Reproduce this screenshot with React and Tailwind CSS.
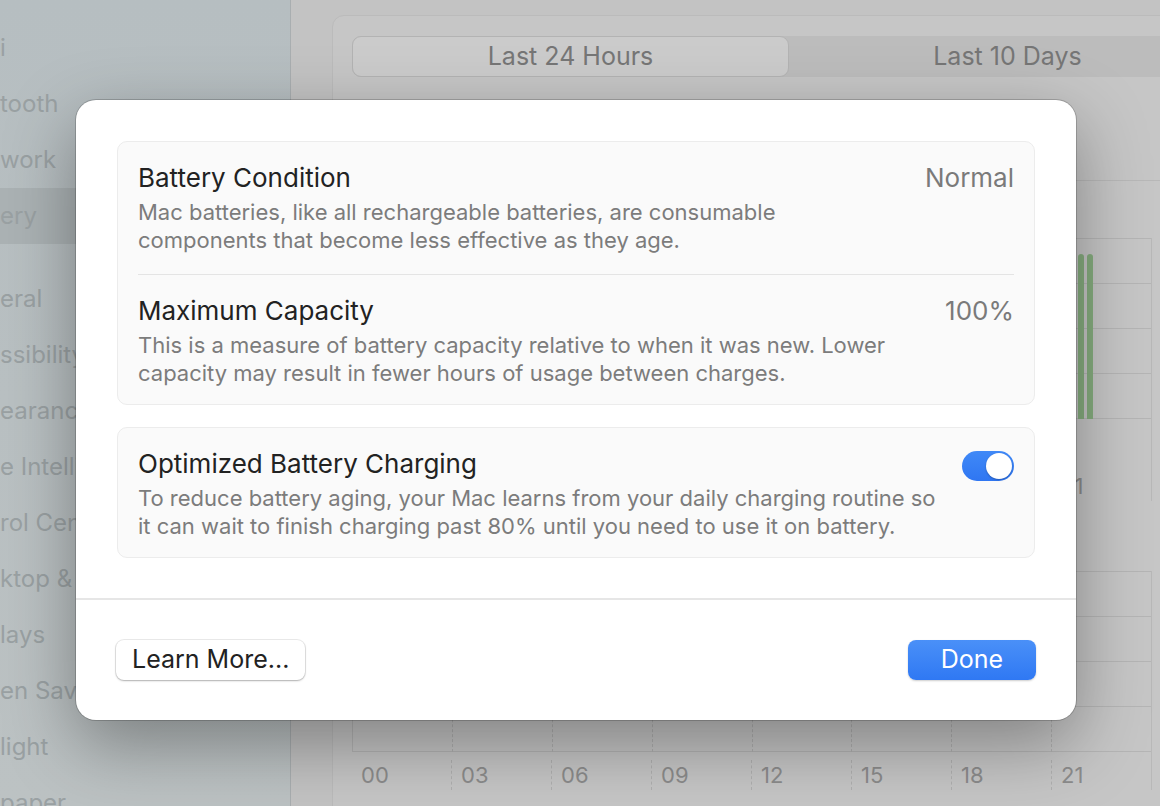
import React from "react";

const sidebarTop = ["i", "tooth", "work", "ery"];
const sidebarBottom = ["eral", "ssibility", "earance", "e Intelligence", "rol Center", "ktop & Dock", "lays", "en Saver", "light", "paper"];
const hours = ["00", "03", "06", "09", "12", "15", "18", "21"];

function SidebarItem({ label, active }) {
    return (
        <div className={`h-[56px] flex items-center whitespace-nowrap ${active ? "bg-[#abb2b4]" : ""}`}>
            <span className="text-[24px] text-[#9aa1a3]">{label}</span>
        </div>
    );
}

// labels: which hour labels are drawn (the top chart's are hidden under the sheet)
function Chart({ rows, labelGap, bars, labels }) {
    return (
        <div className="w-[800px] border-r border-[#b8b8b8]">
            <div className="relative">
                {Array.from({ length: rows }).map((_, i) => (
                    <div key={i} className="h-[45px] border-t border-[#b5b5b5]" />
                ))}
                <div className="border-t border-[#b5b5b5]" />
                <div className="absolute inset-0 flex">
                    {hours.map((h, i) => (
                        <div key={h} className={`flex-1 ${i > 0 ? "border-l border-dashed border-[#b0b0b0]" : "border-l border-[#b5b5b5]"}`} />
                    ))}
                </div>
                {bars && (
                    <div className="absolute left-[726px] top-[16px] bottom-0 flex gap-[3px]">
                        <div className="w-[6px] rounded-t-[3px] bg-[#86ad7f]" />
                        <div className="w-[6px] rounded-t-[3px] bg-[#86ad7f]" />
                    </div>
                )}
            </div>
            <div className="flex" style={{ paddingTop: labelGap }}>
                {hours.map((h, i) => (
                    <div key={h} className={`flex-1 pl-[9px] text-[22px] leading-[30px] text-[#8c8c8c] ${i > 0 ? "border-l border-dashed border-[#b0b0b0]" : ""}`}>
                        {labels.includes(h) ? h : "\u00a0"}
                    </div>
                ))}
            </div>
        </div>
    );
}

function Row({ title, value, children, toggle }) {
    return (
        <div className="flex items-start justify-between gap-6">
            <div>
                <div className="text-[26px] leading-[32px] text-[#222222]">{title}</div>
                <div className="mt-[4px] text-[22px] leading-[28px] text-[#7c7c7c]">{children}</div>
            </div>
            {value && <div className="text-[26px] leading-[32px] text-[#7a7a7a]">{value}</div>}
            {toggle && (
                <div className="mt-[3px] w-[52px] h-[30px] shrink-0 rounded-full bg-gradient-to-b from-[#4089f7] to-[#2f76f2] p-[2px] flex justify-end">
                    <div className="w-[26px] h-[26px] rounded-full bg-white shadow-[0_1px_2px_rgba(0,0,0,0.25)]" />
                </div>
            )}
        </div>
    );
}

export default function App() {
    return (
        <div className="relative w-[1160px] h-[806px] overflow-hidden bg-[#c3c3c3] font-['Inter',sans-serif]">
            <div className="flex h-full">
                <div className="w-[291px] shrink-0 h-full bg-gradient-to-b from-[#b6bec1] via-[#b9c0c2] to-[#bcc2c3] border-r border-[#a9aeb0] pt-[20px]">
                    {sidebarTop.map((s, i) => (
                        <SidebarItem key={s} label={s} active={i === 3} />
                    ))}
                    <div className="h-[27px]" />
                    {sidebarBottom.map((s) => (
                        <SidebarItem key={s} label={s} />
                    ))}
                </div>

                <div className="flex-1 pl-[41px] pt-[15px] overflow-hidden">
                    <div className="w-[900px] h-[900px] rounded-[12px] border border-[#bbbbbb] bg-[#c6c6c6] pl-[19px] pt-[20px]">
                        <div className="w-[876px] h-[41px] rounded-[9px] bg-[#bcbcbc] flex">
                            <div className="w-[437px] rounded-[9px] border border-[#b3b3b3] bg-[#cbcbcb] flex items-center justify-center text-[25px] text-[#767676]">
                                Last 24 Hours
                            </div>
                            <div className="w-[437px] flex items-center justify-center text-[25px] text-[#767676]">
                                Last 10 Days
                            </div>
                        </div>
                        <div className="mt-[103px] -ml-[20px] border-t border-[#b8b8b8]" />
                        <div className="mt-[57px]">
                            <Chart rows={4} labelGap={52} bars labels={["21"]} />
                        </div>
                        <div className="mt-[70px]">
                            <Chart rows={4} labelGap={8} labels={hours} />
                        </div>
                    </div>
                </div>
            </div>

            <div className="absolute left-[76px] top-[100px] w-[1000px] h-[620px] rounded-[20px] bg-white shadow-[0_0_0_1px_rgba(0,0,0,0.18),0_24px_70px_rgba(0,0,0,0.35)] flex flex-col">
                <div className="px-[41px] pt-[41px] flex flex-col gap-[22px]">
                    <div className="rounded-[10px] border border-[#ececec] bg-[#fafafa] px-[20px] pt-[20px] pb-[17px]">
                        <Row title="Battery Condition" value="Normal">
                            Mac batteries, like all rechargeable batteries, are consumable
                            <br />
                            components that become less effective as they age.
                        </Row>
                        <div className="my-[20px] border-t border-[#e4e4e4]" />
                        <Row title="Maximum Capacity" value="100%">
                            This is a measure of battery capacity relative to when it was new. Lower
                            <br />
                            capacity may result in fewer hours of usage between charges.
                        </Row>
                    </div>
                    <div className="rounded-[10px] border border-[#ececec] bg-[#fafafa] px-[20px] pt-[20px] pb-[17px]">
                        <Row title="Optimized Battery Charging" toggle>
                            To reduce battery aging, your Mac learns from your daily charging routine so
                            <br />
                            it can wait to finish charging past 80% until you need to use it on battery.
                        </Row>
                    </div>
                </div>
                <div className="mt-auto border-t-2 border-[#e6e6e6] h-[122px] px-[40px] flex items-center justify-between">
                    <button className="h-[40px] px-[16px] rounded-[8px] bg-white text-[25px] text-[#222222] shadow-[0_0_0_1px_rgba(0,0,0,0.08),0_1px_2px_rgba(0,0,0,0.25)]">
                        Learn More...
                    </button>
                    <button className="h-[40px] w-[128px] rounded-[8px] bg-gradient-to-b from-[#4a90f8] to-[#2f78f3] text-[25px] text-white shadow-[0_1px_2px_rgba(0,0,0,0.2)]">
                        Done
                    </button>
                </div>
            </div>
        </div>
    );
}
